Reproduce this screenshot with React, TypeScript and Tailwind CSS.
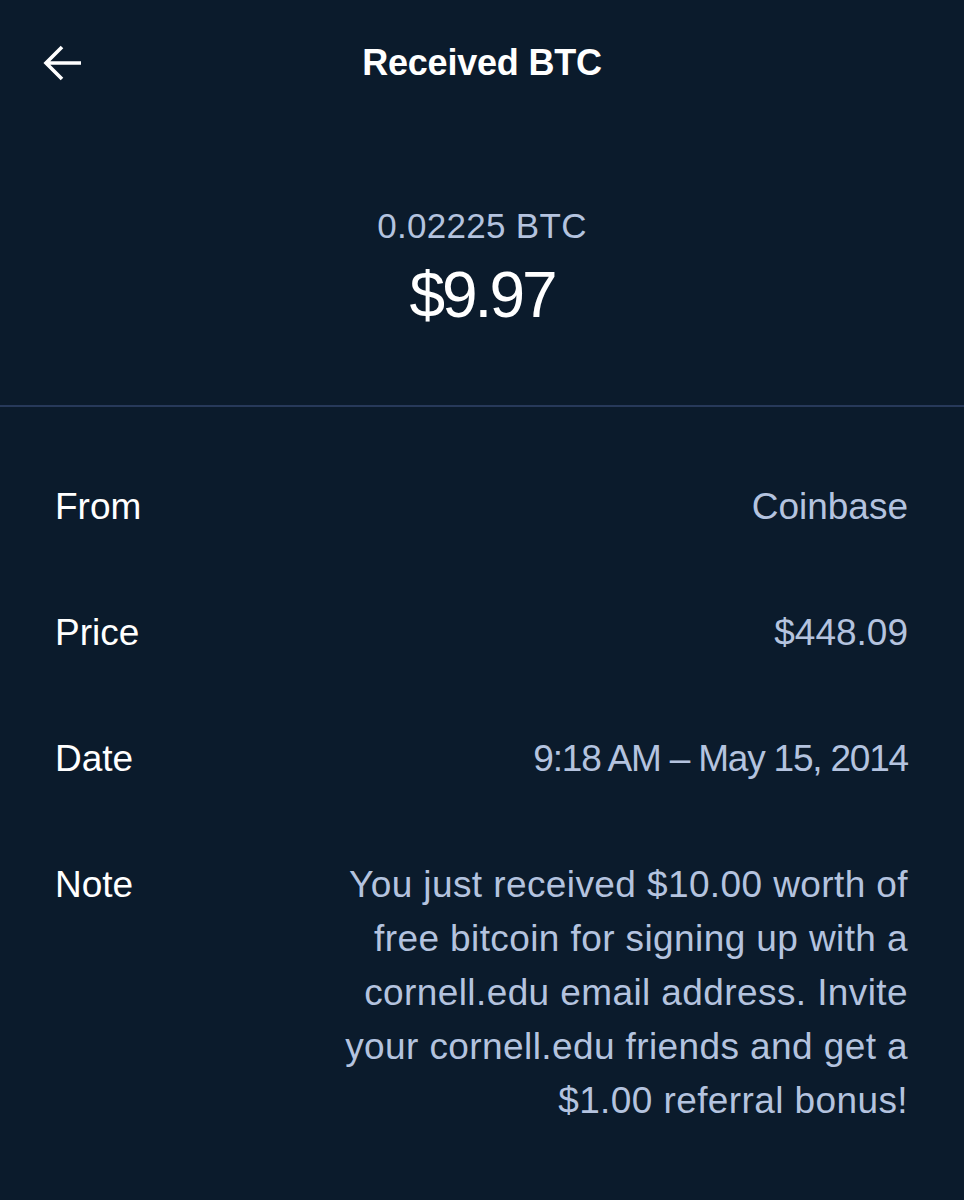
import React from "react";

function BackArrow() {
  return (
    <svg width="40" height="38" viewBox="0 0 40 38" fill="none">
      <path
        d="M38 19 H4 M19 3 L3 19 L19 35"
        stroke="#ffffff"
        strokeWidth="3.6"
        strokeLinecap="butt"
        strokeLinejoin="miter"
      />
    </svg>
  );
}

function Row({
  label,
  value,
  valueClass = "",
}: {
  label: string;
  value: React.ReactNode;
  valueClass?: string;
}) {
  return (
    <div className="flex items-start justify-between">
      <div className="text-white text-[37px] leading-[54px]">{label}</div>
      <div className={"text-[#b4c3df] text-[37px] leading-[54px] text-right " + valueClass}>
        {value}
      </div>
    </div>
  );
}

export default function App() {
  return (
    <div
      className="w-full min-h-[1200px] bg-[#0b1b2c] overflow-hidden"
      style={{ fontFamily: '"Liberation Sans", Arial, sans-serif' }}
    >
      <header className="h-[126px] grid grid-cols-[1fr_auto_1fr] items-center px-[43px]">
        <div className="flex items-center">
          <BackArrow />
        </div>
        <h1 className="text-white font-bold text-[36px] leading-[40px] tracking-[-0.2px]">
          Received BTC
        </h1>
        <div />
      </header>

      <section className="flex flex-col items-center pt-[80px] pb-[74px] border-b-2 border-[#27395a]">
        <div className="text-[#b4c3df] text-[35px] leading-[40px] tracking-[0.3px]">
          0.02225 BTC
        </div>
        <div className="mt-[13px] text-white text-[64px] leading-[72px] tracking-[-3px]">
          $9.97
        </div>
      </section>

      <section className="flex flex-col gap-[72px] pt-[73px] pl-[55px] pr-[56px]">
        <Row label="From" value="Coinbase" />
        <Row label="Price" value="$448.09" />
        <Row label="Date" value="9:18 AM – May 15, 2014" valueClass="tracking-[-1.2px]" />
        <Row
          label="Note"
          valueClass="tracking-[0.4px]"
          value={
            <>
              You just received $10.00 worth of
              <br />
              free bitcoin for signing up with a
              <br />
              cornell.edu email address. Invite
              <br />
              your cornell.edu friends and get a
              <br />
              $1.00 referral bonus!
            </>
          }
        />
      </section>
    </div>
  );
}
